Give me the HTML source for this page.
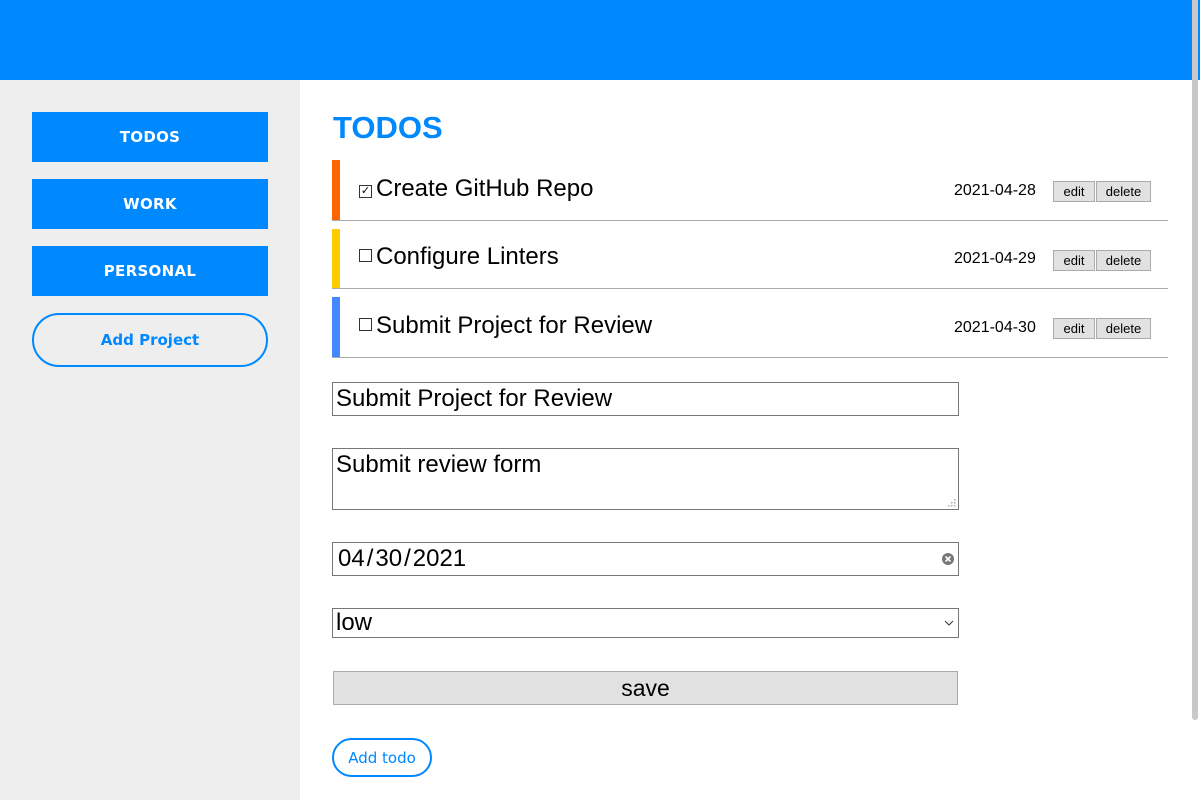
<!DOCTYPE html>
<html><head><meta charset="utf-8"><style>
*{box-sizing:border-box;margin:0;padding:0}
body{width:1200px;height:800px;overflow:hidden;position:relative;font-family:"Liberation Sans",sans-serif;background:#fff}
.hdr{position:absolute;left:0;top:0;width:1200px;height:80px;background:#0088ff}
.side{position:absolute;left:0;top:80px;width:300px;height:720px;background:#eeeeee}
.nb{position:absolute;left:32px;width:236px;height:50px;background:#0088ff;color:#fff;font-family:"DejaVu Sans",sans-serif;font-weight:bold;font-size:15px;display:flex;align-items:center;justify-content:center;letter-spacing:0.3px}
.ap{position:absolute;left:32px;top:313px;width:236px;height:54px;border:2px solid #0088ff;border-radius:27px;color:#0088ff;font-family:"DejaVu Sans",sans-serif;font-weight:bold;font-size:15px;display:flex;align-items:center;justify-content:center}
h1{position:absolute;left:333px;top:110px;font-size:31px;font-weight:bold;color:#0088ff;line-height:36px}
.row{position:absolute;left:332px;width:836px;border-bottom:1px solid #aaa}
.bar{position:absolute;left:0;top:0;width:8px;height:100%}
.tt{position:absolute;left:27px;font-size:24px;color:#000;line-height:28px}
.cb{display:inline-block;width:13px;height:13px;border:1px solid #333;margin-right:4px;vertical-align:2px;font-size:11px;line-height:11px;text-align:center}
.dt{position:absolute;left:622px;font-size:16px}
.bt{position:absolute;height:21px;border:1px solid #aaa;background:#e1e1e1;font-size:13px;display:flex;align-items:center;justify-content:center;font-family:"Liberation Sans",sans-serif}
.f{position:absolute;left:332px;width:627px;border:1px solid #777;font-size:24px;padding-left:3px}
.sb{position:absolute;left:1192px;top:0;width:6px;height:720px;background:#c8c8c8;border-radius:0 0 3px 3px}
</style></head><body>
<div class="hdr"></div>
<div class="sb"></div>
<div class="side"></div>
<div class="nb" style="top:112px">TODOS</div>
<div class="nb" style="top:179px">WORK</div>
<div class="nb" style="top:246px">PERSONAL</div>
<div class="ap">Add Project</div>
<h1>TODOS</h1>

<div class="row" style="top:160px;height:61px"><div class="bar" style="background:#ff6600"></div>
<div class="tt" style="top:15px"><span class="cb">✓</span>Create GitHub Repo</div>
<div class="dt" style="top:22px">2021-04-28</div></div>
<div class="bt" style="left:1053px;top:181px;width:42px">edit</div>
<div class="bt" style="left:1096px;top:181px;width:55px">delete</div>

<div class="row" style="top:229px;height:60px"><div class="bar" style="background:#ffcc00"></div>
<div class="tt" style="top:14px"><span class="cb"></span>Configure Linters</div>
<div class="dt" style="top:21px">2021-04-29</div></div>
<div class="bt" style="left:1053px;top:250px;width:42px">edit</div>
<div class="bt" style="left:1096px;top:250px;width:55px">delete</div>

<div class="row" style="top:297px;height:61px"><div class="bar" style="background:#4488ff"></div>
<div class="tt" style="top:15px"><span class="cb"></span>Submit Project for Review</div>
<div class="dt" style="top:22px">2021-04-30</div></div>
<div class="bt" style="left:1053px;top:318px;width:42px">edit</div>
<div class="bt" style="left:1096px;top:318px;width:55px">delete</div>

<div class="f" style="top:382px;height:34px;line-height:32px">Submit Project for Review</div>
<div class="f" style="top:448px;height:62px;line-height:32px">Submit review form
<svg style="position:absolute;right:2px;bottom:2px" width="8" height="8"><g fill="#aaa"><rect x="6" y="0" width="1.5" height="1.5"/><rect x="3" y="3" width="1.5" height="1.5"/><rect x="6" y="3" width="1.5" height="1.5"/><rect x="0" y="6" width="1.5" height="1.5"/><rect x="3" y="6" width="1.5" height="1.5"/><rect x="6" y="6" width="1.5" height="1.5"/></g></svg></div>
<div class="f" style="top:542px;height:34px;line-height:32px;padding-left:5px">04<span style="margin:0 2px">/</span>30<span style="margin:0 2px">/</span>2021
<svg style="position:absolute;right:4px;top:10px" width="12" height="12"><circle cx="6" cy="6" r="6" fill="#777"/><path d="M3.5 3.5L8.5 8.5M8.5 3.5L3.5 8.5" stroke="#fff" stroke-width="1.6"/></svg></div>
<div class="f" style="top:608px;height:30px;line-height:28px">low
<svg style="position:absolute;right:4px;top:11px" width="10" height="7"><path d="M1 1L5 5L9 1" stroke="#333" fill="none" stroke-width="1"/></svg></div>
<div style="position:absolute;left:333px;top:671px;width:625px;height:34px;background:#e1e1e1;border:1px solid #aaa;font-size:23px;text-align:center;line-height:32px">save</div>
<div style="position:absolute;left:332px;top:738px;width:100px;height:39px;border:2px solid #0088ff;border-radius:20px;color:#0088ff;font-family:'DejaVu Sans',sans-serif;font-size:15px;display:flex;align-items:center;justify-content:center">Add todo</div>
</body></html>
